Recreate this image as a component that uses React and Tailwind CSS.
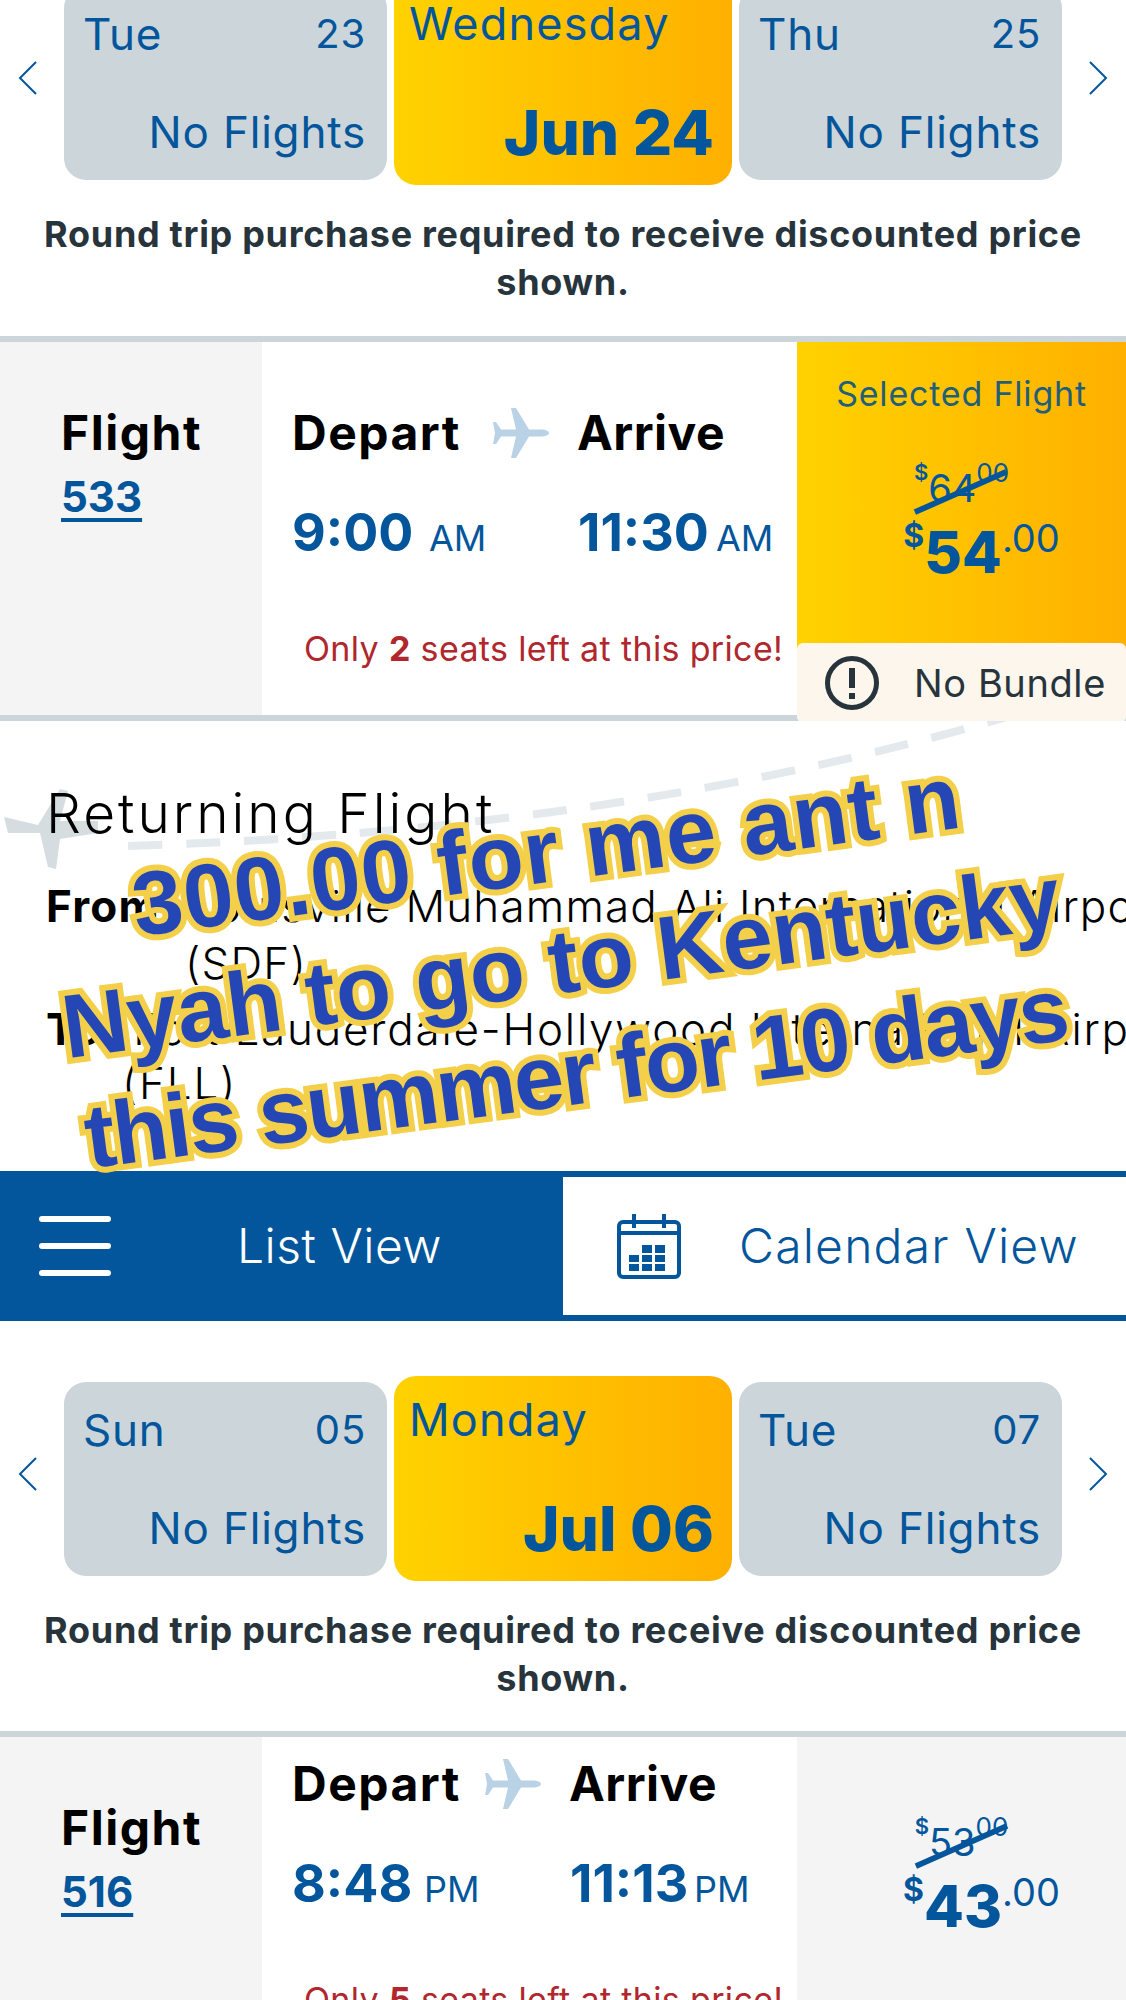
import React from "react";

const BLUE = "text-[#03569b]";

const PlaneIcon = ({ className }) => (
  <svg viewBox="0 0 56 50" className={className} fill="currentColor">
    <path d="M56 25c0-2-4-3.500-8-3.500H36L23 0h-5l5 21.500H8L3 14H0l2 11-2 11h3l5-7.500h15l-5 21.500h5l13-21.500h12c4 0 8-1.500 8-3.500z" />
  </svg>
);

const Chevron = ({ right }) => (
  <svg viewBox="0 0 20 34" className="mb-[10px] h-[34px] w-[20px] text-[#03569b]" fill="none" stroke="currentColor" strokeWidth="2">
    <path d={right ? "M2 1l16 16L2 33" : "M18 1L2 17l16 16"} />
  </svg>
);

const DayTile = ({ day, num }) => (
  <div className={`flex h-[194px] w-[323px] flex-col justify-between rounded-[22px] bg-[#ccd5da] pb-[21px] pl-[19px] pr-[21px] pt-[21px] text-[44px] leading-[54px] tracking-[0.8px] ${BLUE}`}>
    <div className="flex justify-between">
      <span>{day}</span>
      <span className="text-[40px]">{num}</span>
    </div>
    <div className="text-right">No Flights</div>
  </div>
);

const DateStrip = ({ left, mid, right, className }) => (
  <section className={`flex flex-col ${className}`}>
    <div className="flex items-center justify-between px-[18px]">
      <Chevron />
      <div className="flex items-center gap-[7px]">
        <DayTile day={left[0]} num={left[1]} />
        <div className={`flex h-[205px] w-[338px] flex-col justify-between rounded-[22px] bg-gradient-to-r from-[#ffd200] to-[#ffb000] pb-[14px] pl-[15px] pr-[18px] pt-[17px] ${BLUE}`}>
          <div className="text-[45px] leading-[54px] tracking-[1.2px]">{mid[0]}</div>
          <div className="text-right text-[62px] font-extrabold leading-[76px]">{mid[1]}</div>
        </div>
        <DayTile day={right[0]} num={right[1]} />
      </div>
      <Chevron right />
    </div>
    <p className="mt-[25px] text-center text-[36px] font-bold leading-[48px] tracking-[0.7px] text-[#27343c]">
      Round trip purchase required to receive discounted price
      <br />
      shown.
    </p>
  </section>
);

const Price = ({ was, now }) => (
  <div className={`flex w-[150px] flex-col items-center ${BLUE}`}>
    <div className="relative flex h-[50px] items-start text-[38px] leading-[50px]">
      <span className="text-[22px] font-semibold leading-[34px]">$</span>
      <span className="mt-[8px]">{was}</span>
      <span className="text-[26px] leading-[36px]">00</span>
      <svg viewBox="0 0 100 50" className="absolute left-[-2px] top-[12px] h-[50px] w-[96px]" fill="none" stroke="currentColor" strokeWidth="6">
        <path d="M3 46L98 4" />
      </svg>
    </div>
    <div className="flex items-start whitespace-nowrap pl-[40px] leading-none">
      <span className="mt-[11px] text-[32px] font-bold leading-[40px]">$</span>
      <span className="mt-[18px] text-[58px] font-extrabold leading-[58px]">{now}</span>
      <span className="mt-[10px] text-[38px] leading-[46px]">.00</span>
    </div>
  </div>
);

const FlightRow = ({ number, depart, arrive, meridiem, seats, was, now, selected, compact }) => (
  <div className="border-y-[6px] border-[#ccd5da]">
    <div className="grid h-[373px] grid-cols-[262px_535px_329px]">
      <div className="bg-[#f4f4f4] pl-[61px] pt-[63px]">
        <div className="text-[48px] font-bold leading-[56px] tracking-[1.5px] text-black">Flight</div>
        <a className={`mt-[8px] block text-[42px] font-bold leading-[56px] underline underline-offset-[6px] ${BLUE}`}>{number}</a>
      </div>
      <div className="bg-white pl-[30px]">
        <div className={`flex items-center ${compact ? "pt-[19px]" : "pt-[63px]"}`}>
          <span className="text-[48px] font-bold leading-[56px] tracking-[1.5px] text-black">Depart</span>
          <PlaneIcon className={`h-[50px] w-[56px] text-[#b9d2e6] ${compact ? "ml-[24px]" : "ml-[32px]"}`} />
          <span className="ml-[28px] text-[48px] font-bold leading-[56px] tracking-[0.5px] text-black">Arrive</span>
        </div>
        <div className={`mt-[41px] flex items-baseline text-[52px] font-bold leading-[62px] ${BLUE}`}>
          <span className={compact ? "w-[132px]" : "w-[137px]"}>{depart}</span>
          <span className={`text-[36px] font-normal ${compact ? "w-[146px]" : "w-[149px]"}`}>{meridiem}</span>
          <span className={compact ? "w-[124px]" : "w-[138px]"}>{arrive}</span>
          <span className="text-[36px] font-normal">{meridiem}</span>
        </div>
        <p className="mt-[58px] whitespace-nowrap pl-[12px] text-[34px] leading-[44px] tracking-[0.35px] text-[#b0272d]">
          Only <b>{seats}</b> seats left at this price!
        </p>
      </div>
      {selected ? (
        <div className="relative flex flex-col items-center bg-gradient-to-r from-[#ffd200] to-[#ffb000] pt-[30px]">
          <div className="whitespace-nowrap text-[34px] leading-[44px] tracking-[0.8px] text-[#1f5f78]">Selected Flight</div>
          <div className="mt-[39px]">
            <Price was={was} now={now} />
          </div>
          <div className="absolute inset-x-0 top-[301px] flex h-[80px] items-center rounded-[6px] bg-[#fcf6ec] pl-[28px] text-[38px] tracking-[0.6px] text-[#27343c]">
            <svg viewBox="0 0 54 54" className="h-[54px] w-[54px] shrink-0" fill="none" stroke="currentColor">
              <circle cx="27" cy="27" r="24.500" strokeWidth="5" />
              <path d="M27 12v20" strokeWidth="6" />
              <path d="M27 37v6" strokeWidth="6" />
            </svg>
            <span className="ml-[35px] whitespace-nowrap">No Bundle</span>
          </div>
        </div>
      ) : (
        <div className="flex justify-center bg-[#f4f4f4] pt-[72px]">
          <Price was={was} now={now} />
        </div>
      )}
    </div>
  </div>
);

const ReturningFlight = () => (
  <section className="relative h-[450px] overflow-hidden bg-white text-black">
    {/* plane and dashed route behind the heading */}
    <svg viewBox="0 0 1126 450" className="absolute inset-0 h-[450px] w-[1126px]" fill="none">
      <path d="M128 125Q620 110 1010 -5" stroke="#e3e9ec" strokeWidth="8" strokeDasharray="34 24" />
      <path fill="#d5dde1" d="M4 96l34 8 22-36 8 2-8 30h38v12l-38 6-4 30-8-2-8-34-32 0z" />
    </svg>
    <div className="relative pl-[46px] pt-[62px]">
      <h2 className="text-[55px] font-light leading-[60px] tracking-[3px]">Returning Flight</h2>
      <div className="mt-[39px] whitespace-nowrap text-[44px] font-light leading-[48px] tracking-[1.2px]">
        <b className="font-bold">From:</b> Louisville Muhammad Ali International Airport
        <div className="pl-[139px] pt-[9px]">(SDF)</div>
      </div>
      <div className="mt-[18px] whitespace-nowrap text-[44px] font-light leading-[48px] tracking-[1.8px]">
        <b className="font-bold">To:</b> Fort Lauderdale-Hollywood International Airport
        <div className="pl-[76px] pt-[6px]">(FLL)</div>
      </div>
    </div>
  </section>
);

const ViewToggle = () => (
  <div className="grid h-[150px] grid-cols-2 border-y-[6px] border-[#03569b] bg-[#03569b]">
    <div className="flex items-center pl-[39px] text-[48px] font-light tracking-[0.5px] text-white">
      <div className="flex w-[72px] flex-col gap-[21px]">
        <span className="h-[6px] rounded-full bg-white" />
        <span className="h-[6px] rounded-full bg-white" />
        <span className="h-[6px] rounded-full bg-white" />
      </div>
      <span className="ml-[126px]">List View</span>
    </div>
    <div className={`flex items-center bg-white pl-[54px] text-[48px] font-light tracking-[1.2px] ${BLUE}`}>
      <svg viewBox="0 0 64 66" className="h-[66px] w-[64px]" fill="none" stroke="currentColor" strokeWidth="4">
        <rect x="2" y="9" width="60" height="55" rx="4" />
        <path d="M17 1v14M47 1v14M2 20h60" />
        <path fill="currentColor" stroke="none" d="M12 42h10v7H12zM12 51h10v7H12zM25 42h10v7H25zM25 51h10v7H25zM38 32h10v8H38zM38 42h10v7H38zM38 51h10v7H38zM25 32h10v8H25z" />
      </svg>
      <span className="ml-[58px] whitespace-nowrap">Calendar View</span>
    </div>
  </div>
);

const Overlay = () => (
  <div className="absolute left-[-24px] top-[794px] flex w-[1170px] -rotate-[7.5deg] flex-col items-center whitespace-nowrap font-['Liberation_Sans',sans-serif] text-[90px] font-bold leading-[112px] text-[#2547b5] [-webkit-text-stroke:12px_#f3cf4a] [paint-order:stroke_fill]">
    <span className="tracking-[1px]">300.00 for me ant n</span>
    <span>Nyah to go to Kentucky</span>
    <span className="tracking-[-2px]">this summer for 10 days</span>
  </div>
);

export default function App() {
  return (
    <div className="relative h-[2000px] w-[1126px] overflow-hidden bg-white font-['Inter',sans-serif]">
      <DateStrip
        className="-mt-[20px] pb-[30px]"
        left={["Tue", "23"]}
        mid={["Wednesday", "Jun 24"]}
        right={["Thu", "25"]}
      />
      <FlightRow
        number="533"
        depart="9:00"
        arrive="11:30"
        meridiem="AM"
        seats="2"
        was="64"
        now="54"
        selected
      />
      <ReturningFlight />
      <ViewToggle />
      <DateStrip
        className="mt-[55px] pb-[29px]"
        left={["Sun", "05"]}
        mid={["Monday", "Jul 06"]}
        right={["Tue", "07"]}
      />
      <FlightRow
        number="516"
        depart="8:48"
        arrive="11:13"
        meridiem="PM"
        seats="5"
        was="53"
        now="43"
        compact
      />
      <Overlay />
    </div>
  );
}
